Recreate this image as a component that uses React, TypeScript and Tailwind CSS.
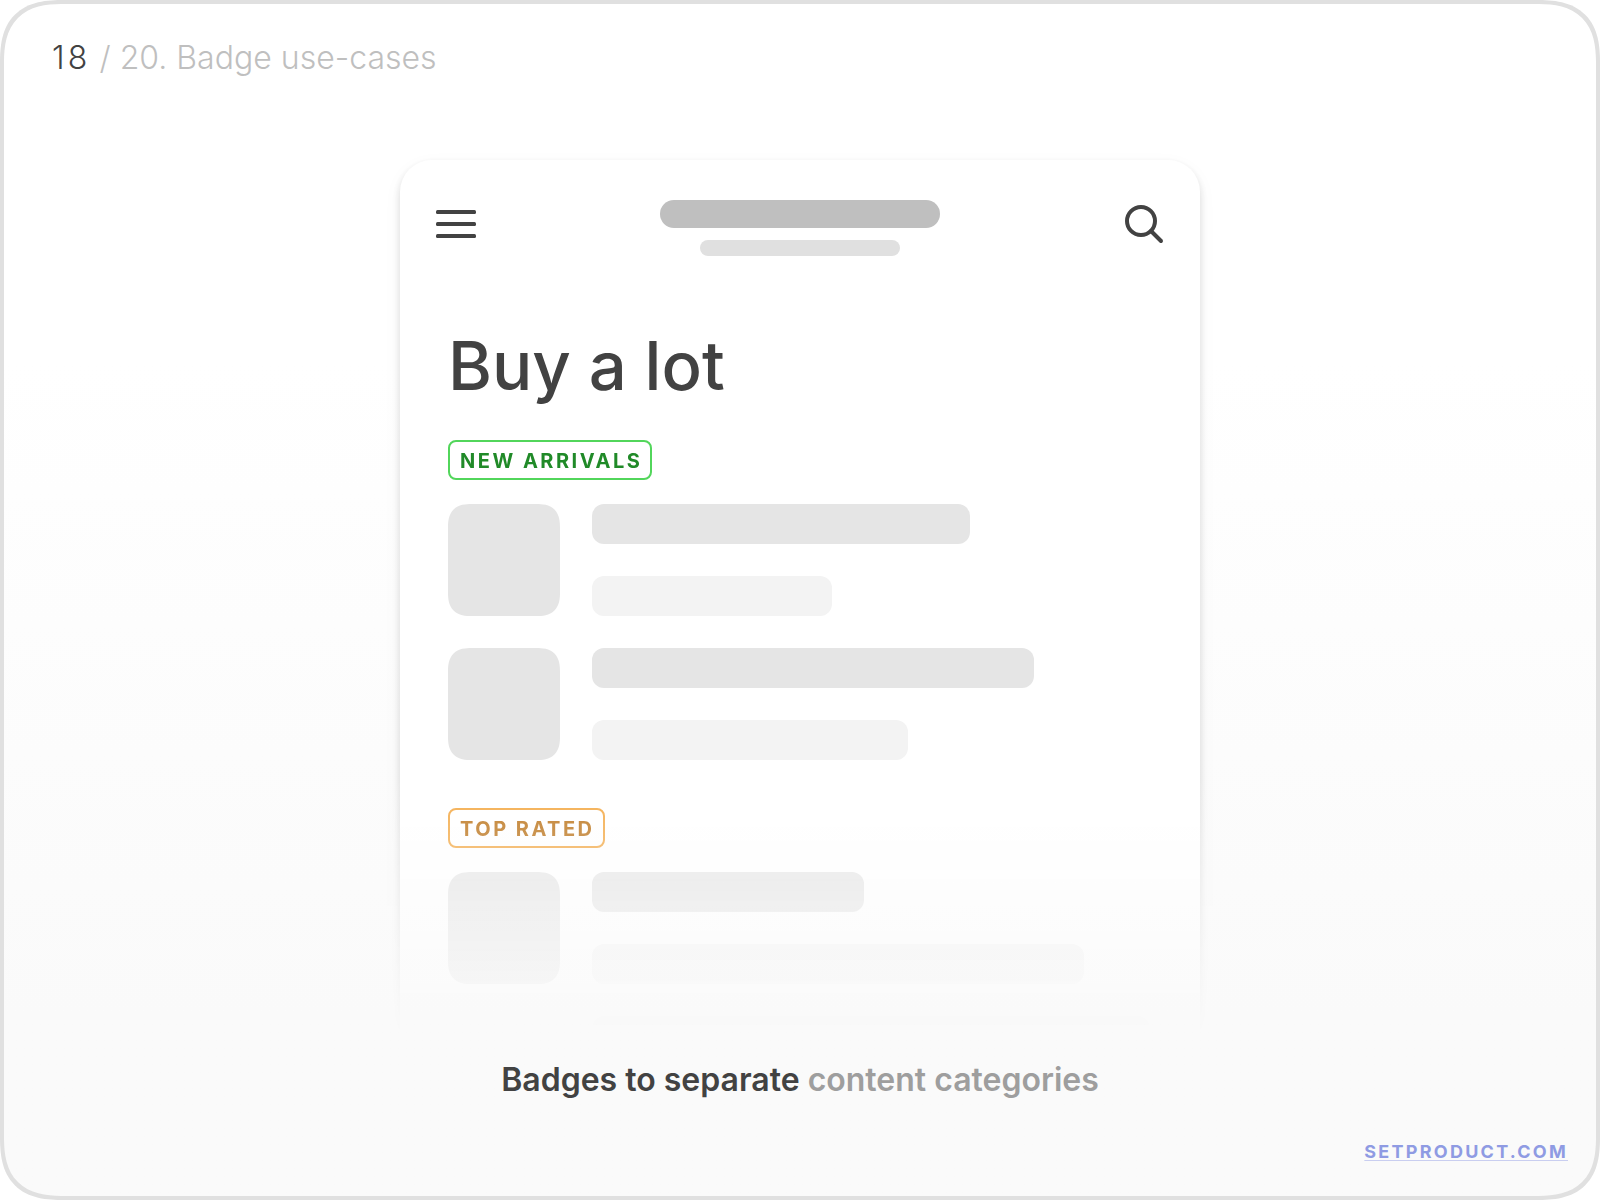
import React from 'react';
import clsx from 'clsx';

type Row = { primary: string; secondary?: string; partial?: boolean };

type Category = {
  label: string;
  badgeClassName: string;
  rows: Row[];
};

const categories: Category[] = [
  {
    label: 'NEW ARRIVALS',
    badgeClassName: 'border-[#52d65b] text-[#208a28]',
    rows: [
      { primary: 'w-[378px]', secondary: 'w-60' },
      { primary: 'w-[442px]', secondary: 'w-[316px]' },
    ],
  },
  {
    label: 'TOP RATED',
    badgeClassName: 'border-[#f3aa48] text-[#bd7720]',
    rows: [
      { primary: 'w-[272px]', secondary: 'w-[492px]' },
      { primary: 'w-[558px]', partial: true },
    ],
  },
];

const MenuIcon = () => (
  <svg width="40" height="40" viewBox="0 0 40 40" fill="#424242" aria-hidden="true">
    <rect x="0" y="6" width="40" height="4" rx="1.5" />
    <rect x="0" y="18" width="40" height="4" rx="1.5" />
    <rect x="0" y="30" width="40" height="4" rx="1.5" />
  </svg>
);

const SearchIcon = () => (
  <svg width="40" height="40" viewBox="0 0 40 40" fill="none" stroke="#424242" strokeWidth="4" aria-hidden="true">
    <circle cx="17" cy="17" r="14" />
    <path d="M27 27L37 37" strokeLinecap="round" />
  </svg>
);

const Badge: React.FC<{ label: string; className: string }> = ({ label, className }) => (
  <h2
    className={clsx(
      'flex h-10 items-center self-start rounded-lg border-2 pt-px pl-[10px] pr-2 text-xl font-bold tracking-[0.125em] whitespace-nowrap',
      className
    )}
  >
    {label}
  </h2>
);

const SkeletonRow: React.FC<{ row: Row }> = ({ row }) => {
  // last row only peeks out above the fade
  if (row.partial) {
    return <li className={clsx('ml-36 h-5 rounded-t-xl bg-[#f3f3f3]', row.primary)} />;
  }
  return (
    <li className="flex gap-8">
      <div className="size-28 shrink-0 rounded-3xl bg-[#e5e5e5] [corner-shape:superellipse(1.4)]" />
      <div className="flex flex-col gap-8">
        <div className={clsx('h-10 rounded-xl bg-[#e5e5e5]', row.primary)} />
        <div className={clsx('h-10 rounded-xl bg-[#f3f3f3]', row.secondary)} />
      </div>
    </li>
  );
};

const App: React.FC = () => {
  return (
    <div className="min-h-screen bg-white font-['Inter','Liberation_Sans',sans-serif] text-[#424242]">
      <main className="flex min-h-screen flex-col rounded-[64px] border-4 border-[#e0e0e0] bg-linear-to-b from-white from-30% to-[#fafafa] to-85% pt-8 [corner-shape:superellipse(1.4)]">
        <h1 className="px-12 text-[32px] leading-11 font-[350] text-[#bfbfbf]">
          <span className="tracking-widest text-[#424242]">18</span> / 20. Badge use-cases
        </h1>

        {/* Phone card, fades out at the bottom */}
        <div className="flex justify-center pt-20 [mask-image:linear-gradient(to_top,transparent,black_260px)]">
          <article className="w-full max-w-[800px] rounded-t-[32px] bg-white px-12 pt-10 shadow-[0_4px_8px_rgba(0,0,0,0.14),0_6px_20px_rgba(0,0,0,0.04)]">
            <header className="-mx-3 flex items-start justify-between">
              <button type="button" aria-label="Menu" className="mt-1">
                <MenuIcon />
              </button>
              <div className="flex flex-col items-center gap-3">
                <div className="h-7 w-70 rounded-full bg-[#bfbfbf]" />
                <div className="h-4 w-50 rounded-full bg-[#e0e0e0]" />
              </div>
              <button type="button" aria-label="Search" className="mt-1">
                <SearchIcon />
              </button>
            </header>

            <p className="mt-[70px] text-[67px] leading-20 font-medium">Buy a lot</p>

            <div className="mt-[34px] flex flex-col gap-12">
              {categories.map((category) => (
                <section key={category.label} className="flex flex-col gap-6">
                  <Badge label={category.label} className={category.badgeClassName} />
                  <ul className="flex flex-col gap-8">
                    {category.rows.map((row) => (
                      <SkeletonRow key={row.primary} row={row} />
                    ))}
                  </ul>
                </section>
              ))}
            </div>
          </article>
        </div>

        <p className="mt-6 text-center text-[32px] leading-10 font-semibold">
          Badges to separate <span className="text-[#9e9e9e]">content categories</span>
        </p>

        <a
          href="https://setproduct.com"
          className="mt-10 mr-7 self-end text-lg leading-6 font-bold tracking-[0.125em] text-[#8f9be3] underline decoration-[#c9cef0] decoration-1 underline-offset-2"
        >
          SETPRODUCT.COM
        </a>
      </main>
    </div>
  );
};

export default App;
